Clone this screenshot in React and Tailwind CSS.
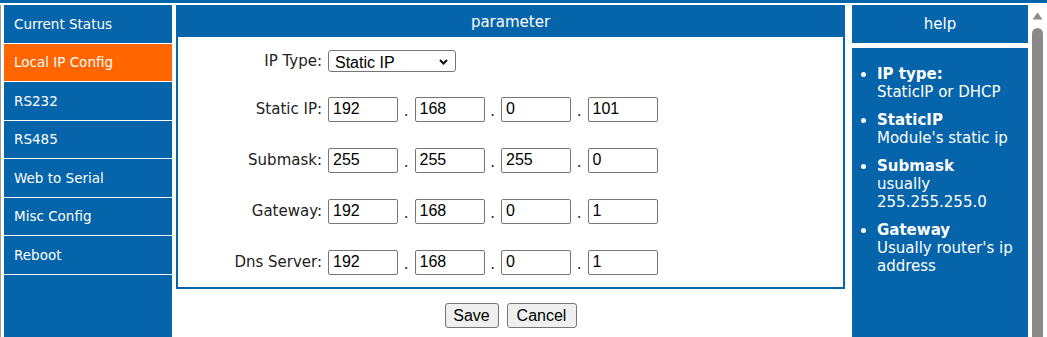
import React, { useState } from "react";

const navItems = [
  "Current Status",
  "Local IP Config",
  "RS232",
  "RS485",
  "Web to Serial",
  "Misc Config",
  "Reboot",
];

const ipRows = [
  { label: "Static IP:", values: ["192", "168", "0", "101"] },
  { label: "Submask:", values: ["255", "255", "255", "0"] },
  { label: "Gateway:", values: ["192", "168", "0", "1"] },
  { label: "Dns Server:", values: ["192", "168", "0", "1"] },
];

const helpItems = [
  { title: "IP type:", text: "StaticIP or DHCP" },
  { title: "StaticIP", text: "Module's static ip" },
  { title: "Submask", text: "usually 255.255.255.0" },
  { title: "Gateway", text: "Usually router's ip address" },
];

const FormRow = ({ label, className, children }) => (
  <div className={`flex items-center ${className}`}>
    <label className="w-[144px] text-right text-[15px] text-[#222]">{label}</label>
    <div className="ml-[6px] flex items-center">{children}</div>
  </div>
);

const IpInputs = ({ values }) => (
  <>
    {values.map((v, i) => (
      <React.Fragment key={i}>
        {i > 0 && (
          <span className="w-[16.5px] text-center text-[15px] text-[#222] leading-none pt-[4px]">.</span>
        )}
        <input
          defaultValue={v}
          className="w-[70px] h-[25px] border border-[#767676] rounded-[2px] px-[4px] bg-white text-[16px] text-black font-['Liberation_Sans',Arial,sans-serif] outline-none"
        />
      </React.Fragment>
    ))}
  </>
);

export default function App() {
  const [active] = useState("Local IP Config");

  return (
    <div className="w-[1047px] h-[337px] overflow-hidden bg-white flex flex-col font-['DejaVu_Sans',Verdana,sans-serif]">
      {/* top strip */}
      <div className="h-[3px] bg-[#0564aa]" />

      <div className="flex flex-1 min-h-0">
        <div className="flex flex-1 mt-[2px]">
          <div className="w-px bg-[#9a9a9a]" />

          {/* Side nav */}
          <div className="ml-[3px] w-[168px] bg-[#0564aa] flex flex-col">
            {navItems.map((item) => (
              <div
                key={item}
                className={`h-[38.5px] border-b border-white flex items-center pl-[10px] text-[13.5px] text-white ${
                  item === active ? "bg-[#ff6600]" : ""
                }`}
              >
                {item}
              </div>
            ))}
          </div>

          {/* Parameter panel */}
          <div className="ml-[4px] w-[669px] flex flex-col">
            <div className="h-[284px] border-2 border-[#0564aa] flex flex-col">
              <div className="h-[30px] bg-[#0564aa] flex items-center justify-center text-white text-[15px]">
                parameter
              </div>
              <div className="flex flex-col">
                <FormRow label="IP Type:" className="mt-[13px]">
                  <div className="relative flex">
                    <select className="appearance-none w-[128px] h-[22px] border border-[#767676] rounded-[3px] pl-[6px] bg-white text-[16px] text-black font-['Liberation_Sans',Arial,sans-serif] outline-none">
                      <option>Static IP</option>
                      <option>DHCP</option>
                    </select>
                    <svg
                      className="absolute right-[8px] top-[9px] pointer-events-none"
                      width="9"
                      height="6"
                      viewBox="0 0 9 6"
                    >
                      <polyline points="1,1 4.5,4.5 8,1" fill="none" stroke="#111" strokeWidth="2" />
                    </svg>
                  </div>
                </FormRow>
                {ipRows.map((row, i) => (
                  <FormRow key={row.label} label={row.label} className={i === 0 ? "mt-[24px]" : "mt-[26px]"}>
                    <IpInputs values={row.values} />
                  </FormRow>
                ))}
              </div>
            </div>

            {/* Actions */}
            <div className="mt-[14px] flex justify-center gap-[8px] font-['Liberation_Sans',Arial,sans-serif]">
              <button className="w-[54px] h-[25px] bg-[#efefef] border border-[#767676] rounded-[3px] text-[16px] text-black">
                Save
              </button>
              <button className="w-[70px] h-[25px] bg-[#efefef] border border-[#767676] rounded-[3px] text-[16px] text-black">
                Cancel
              </button>
            </div>
          </div>

          {/* Help panel */}
          <div className="ml-[7px] w-[176px] flex flex-col">
            <div className="h-[38px] bg-[#0564aa] flex items-center justify-center text-white text-[15px]">
              help
            </div>
            <div className="mt-[5px] flex-1 bg-[#0564aa] pt-[17px]">
              <ul className="list-disc pl-[25px] pr-[4px] text-white text-[15px] leading-[18px]">
                {helpItems.map((h) => (
                  <li key={h.title} className="mb-[10px]">
                    <span className="font-bold">{h.title}</span>
                    <br />
                    {h.text}
                  </li>
                ))}
              </ul>
            </div>
          </div>
        </div>

        {/* Scrollbar */}
        <div className="w-[17px] ml-[2px] flex flex-col items-start pl-[2px]">
          <svg className="mt-[9px]" width="11" height="8" viewBox="0 0 11 8">
            <polygon points="5.5,0.5 10.5,7.5 0.5,7.5" fill="#8a8a8a" />
          </svg>
          <div className="mt-[8px] w-[11px] flex-1 bg-[#8a8a8a] rounded-t-full" />
        </div>
      </div>
    </div>
  );
}
